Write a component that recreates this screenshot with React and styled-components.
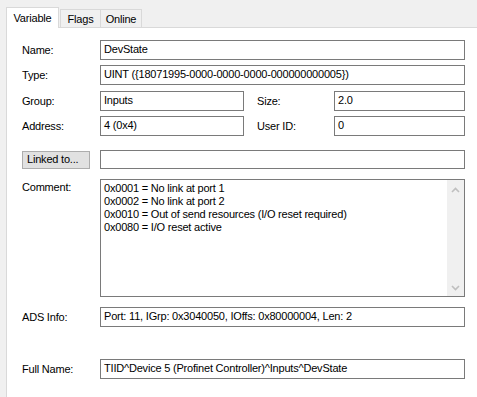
import React from 'react';
import styled, { createGlobalStyle } from 'styled-components';

const GlobalStyle = createGlobalStyle`
  body {
    margin: 0;
    background: #f0f0f0;
    font-family: "Liberation Sans", Arial, sans-serif;
    font-size: 11px;
    letter-spacing: -0.2px;
    color: #000;
    overflow: hidden;
  }
`;

const commentLines = [
  '0x0001 = No link at port 1',
  '0x0002 = No link at port 2',
  '0x0010 = Out of send resources (I/O reset required)',
  '0x0080 = I/O reset active',
];

const Chevron = ({ down }) => (
  <svg width="9" height="6" viewBox="0 0 9 6">
    <path
      d={down ? 'M1 1 L4.5 4.5 L8 1' : 'M1 5 L4.5 1.5 L8 5'}
      fill="none"
      stroke="#bfbfbf"
      strokeWidth="1.6"
    />
  </svg>
);

const App = () => (
  <Window>
    <GlobalStyle />
    <TabStrip>
      <Tab active>Variable</Tab>
      <Tab first>Flags</Tab>
      <Tab>Online</Tab>
    </TabStrip>
    <Panel>
      <Row top={12}>
        <Label>Name:</Label>
        <TextBox>DevState</TextBox>
      </Row>
      <Row top={5}>
        <Label>Type:</Label>
        <TextBox>UINT ({'{'}18071995-0000-0000-0000-000000000005{'}'})</TextBox>
      </Row>
      <Row top={6}>
        <Label>Group:</Label>
        <TextBox width={144}>Inputs</TextBox>
        <Label side>Size:</Label>
        <TextBox>2.0</TextBox>
      </Row>
      <Row top={5}>
        <Label>Address:</Label>
        <TextBox width={144}>4 (0x4)</TextBox>
        <Label side>User ID:</Label>
        <TextBox>0</TextBox>
      </Row>
      <Row top={14} height={19}>
        <Button>Linked to...</Button>
        <TextBox height={19} />
      </Row>
      <Row top={10} height={118} start>
        <Label pad={2}>Comment:</Label>
        <CommentBox>
          <CommentText>
            {commentLines.map(line => (
              <div key={line}>{line}</div>
            ))}
          </CommentText>
          <ScrollBar>
            <Chevron />
            <Chevron down />
          </ScrollBar>
        </CommentBox>
      </Row>
      <Row top={10}>
        <Label>ADS Info:</Label>
        <TextBox>Port: 11, IGrp: 0x3040050, IOffs: 0x80000004, Len: 2</TextBox>
      </Row>
      <Row top={32}>
        <Label>Full Name:</Label>
        <TextBox>TIID^Device 5 (Profinet Controller)^Inputs^DevState</TextBox>
      </Row>
    </Panel>
  </Window>
);

const Window = styled.div`
  width: 477px;
  height: 397px;
  overflow: hidden;
`;

const TabStrip = styled.div`
  display: flex;
  align-items: flex-end;
  padding: 7px 0 0 6px;
`;

const Tab = styled.div`
  position: relative;
  box-sizing: border-box;
  display: flex;
  align-items: center;
  justify-content: center;
  height: ${p => (p.active ? 21 : 18)}px;
  width: ${p => (p.active ? 53 : 41)}px;
  margin-bottom: ${p => (p.active ? -1 : 0)}px;
  padding-top: ${p => (p.active ? 0 : 1)}px;
  background: ${p => (p.active ? '#fff' : '#f0f0f0')};
  border: 1px solid #d9d9d9;
  border-bottom: none;
  border-left: ${p => (p.active || p.first ? '1px solid #d9d9d9' : 'none')};
  z-index: ${p => (p.active ? 1 : 0)};
  ${p => p.first && 'margin-left: 1px;'}
`;

const Panel = styled.div`
  box-sizing: border-box;
  margin-left: 6px;
  width: 471px;
  height: 420px;
  padding: 0 12px 0 15px;
  background: #fff;
  border: 1px solid #d9d9d9;
  border-right: none;
`;

const Row = styled.div`
  display: flex;
  align-items: ${p => (p.start ? 'flex-start' : 'center')};
  height: ${p => p.height || 20}px;
  margin-top: ${p => p.top}px;
`;

const Label = styled.div`
  flex: none;
  width: ${p => (p.side ? 77 : 78)}px;
  padding-top: ${p => p.pad || 0}px;
  margin-left: ${p => (p.side ? 13 : 0)}px;
`;

const TextBox = styled.div`
  box-sizing: border-box;
  flex: ${p => (p.width ? 'none' : '1')};
  width: ${p => (p.width ? `${p.width}px` : 'auto')};
  height: ${p => p.height || 20}px;
  padding: 0 3px;
  line-height: ${p => (p.height || 20) - 3}px;
  border: 1px solid #7a7a7a;
  background: #fff;
  white-space: nowrap;
  overflow: hidden;
`;

const Button = styled.div`
  box-sizing: border-box;
  flex: none;
  width: 68px;
  height: 18px;
  margin-right: 10px;
  padding-left: 4px;
  line-height: 15px;
  background: #e1e1e1;
  border: 1px solid #adadad;
`;

const CommentBox = styled.div`
  box-sizing: border-box;
  flex: 1;
  display: flex;
  height: 118px;
  border: 1px solid #7a7a7a;
`;

const CommentText = styled.div`
  flex: 1;
  padding: 2px 3px;
  line-height: 13px;
`;

const ScrollBar = styled.div`
  flex: none;
  width: 17px;
  background: #f0f0f0;
  display: flex;
  flex-direction: column;
  align-items: center;
  justify-content: space-between;
  padding: 7px 0 5px;
`;

export default App;
